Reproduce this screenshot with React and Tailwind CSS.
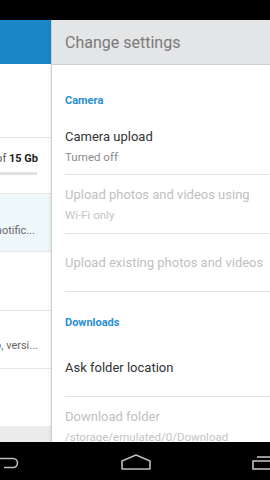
import React from "react";

const font = { fontFamily: "Roboto, 'Noto Sans', sans-serif" };

const LeftPanel = () => (
  <div className="w-[52px] shrink-0 flex flex-col border-r border-[#dcdcdc] overflow-hidden">
    {/* Header */}
    <div className="h-[44px] bg-[#1a86c8]" />
    <div className="h-[74px] border-b border-[#e6e6e6] bg-white" />
    {/* Storage */}
    <div className="h-[56px] border-b border-[#e6e6e6] bg-white flex flex-col justify-end items-end pb-[18px]">
      <div className="flex justify-end w-full overflow-hidden">
        <span className="whitespace-nowrap text-[11px] text-[#555] pr-[13px]">
          Used 1.2 Gb of <b className="text-[#222]">15 Gb</b>
        </span>
      </div>
      <div className="mt-[5px] h-[3px] w-full bg-[#e4e0e2] mr-[14px]" />
    </div>
    {/* Notification row */}
    <div className="h-[58px] border-b border-[#e6e6e6] bg-[#eef8fb] flex justify-end items-end pb-[12px] overflow-hidden">
      <span className="whitespace-nowrap text-[11px] text-[#666] pr-[16px]">
        Show notific...
      </span>
    </div>
    <div className="h-[59px] border-b border-[#e6e6e6] bg-white" />
    <div className="h-[58px] border-b border-[#e6e6e6] bg-white flex justify-end items-end pb-[14px] overflow-hidden">
      <span className="whitespace-nowrap text-[11px] text-[#666] pr-[13px]">
        Help, versi...
      </span>
    </div>
    <div className="h-[57px] bg-white" />
    <div className="flex-1 bg-[#ececec]" />
  </div>
);

const SectionTitle = ({ children, pt, pb }) => (
  <div className={`${pt} ${pb} text-[11px] leading-[14px] font-bold text-[#2a8fd2]`}>{children}</div>
);

const Row = ({ title, sub, disabled, h, border = true, top }) => (
  <div
    className={`${h} flex flex-col ${top ? "justify-start pt-[11px]" : "justify-center"} ${
      border ? "border-b border-[#e4e4e4]" : ""
    }`}
  >
    <div
      className={`whitespace-nowrap text-[13px] leading-[18px] ${
        disabled ? "text-[#bfbfbf]" : "text-[#333]"
      }`}
    >
      {title}
    </div>
    {sub && (
      <div
        className={`whitespace-nowrap mt-[3px] text-[11.5px] leading-[16px] ${
          disabled ? "text-[#c4c4c4]" : "text-[#8a8a8a]"
        }`}
      >
        {sub}
      </div>
    )}
  </div>
);

const RightPanel = () => (
  <div className="flex-1 flex flex-col bg-white shadow-[-2px_0_3px_rgba(0,0,0,0.08)] overflow-hidden">
    <div className="h-[45px] shrink-0 bg-[#e4e5e6] border-b border-[#cfd0d1] flex items-center pl-[13px] pt-[2px]">
      <span className="text-[16px] text-[#7a7a7a]">Change settings</span>
    </div>
    <div className="pl-[13px] flex-1 overflow-hidden">
      <SectionTitle pt="pt-[29px]" pb="pb-[10px]">Camera</SectionTitle>
      <Row title="Camera upload" sub="Turned off" h="h-[57px]" />
      <Row
        title="Upload photos and videos using"
        sub="Wi-Fi only"
        disabled
        h="h-[59px]"
      />
      <Row title="Upload existing photos and videos" disabled h="h-[58px]" />
      <SectionTitle pt="pt-[24px]" pb="pb-[9px]">Downloads</SectionTitle>
      <Row title="Ask folder location" h="h-[58px]" />
      <Row
        title="Download folder"
        sub="/storage/emulated/0/Download"
        disabled
        h="h-[59px]"
        border={false}
        top
      />
    </div>
  </div>
);

const NavBar = () => (
  <div className="h-[38px] shrink-0 bg-black flex items-center justify-between">
    <svg width="20" height="12" viewBox="0 0 20 12" className="mt-[4px]">
      <path d="M0 1.5 H13 A4.5 4.5 0 0 1 13 10.5 H4" fill="none" stroke="#bdbdbd" strokeWidth="1.6" />
    </svg>
    <svg width="30" height="16" viewBox="0 0 30 16" className="mt-[2px]">
      <path d="M1 15 V7 L15 1 L29 7 V15 Z" fill="none" stroke="#bdbdbd" strokeWidth="1.6" strokeLinejoin="round" />
    </svg>
    <svg width="18" height="14" viewBox="0 0 18 14" className="mt-[4px]">
      <path d="M5 1 H18" fill="none" stroke="#bdbdbd" strokeWidth="1.6" />
      <rect x="1" y="5" width="20" height="8" fill="none" stroke="#bdbdbd" strokeWidth="1.6" />
    </svg>
  </div>
);

export default function App() {
  return (
    <div className="w-[270px] h-[480px] flex flex-col bg-black overflow-hidden" style={font}>
      <div className="h-[20px] shrink-0 bg-black" />
      <div className="flex-1 flex min-h-0">
        <LeftPanel />
        <RightPanel />
      </div>
      <NavBar />
    </div>
  );
}
